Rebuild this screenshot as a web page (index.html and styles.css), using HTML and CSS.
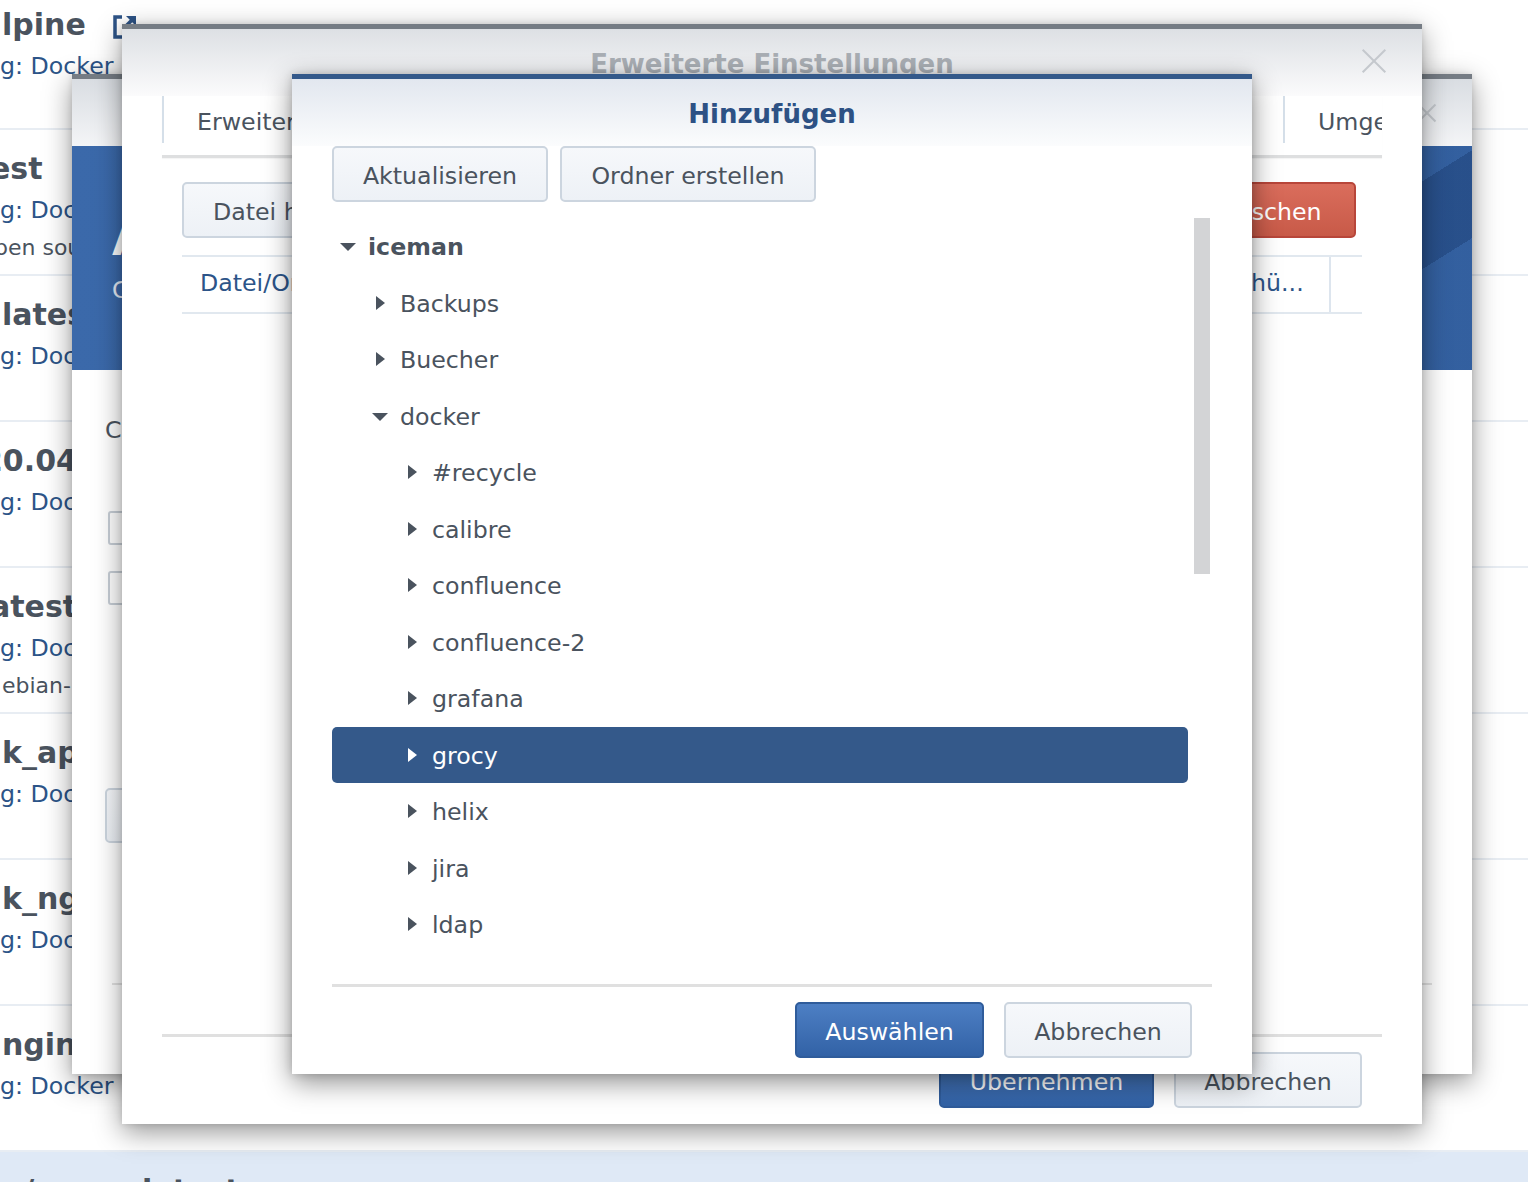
FILE: index.html
```html
<!DOCTYPE html>
<html lang="de">
<head>
<meta charset="utf-8">
<title>Hinzufügen</title>
<link rel="stylesheet" href="styles.css">
</head>
<body>
<div class="list">
  <div class="row">
    <div class="r-title">lpine<svg class="ext ext-1" viewBox="0 0 26 26" width="26" height="26"><path d="M10 3H3v20h20v-7" fill="none" stroke="#2d5386" stroke-width="3.5"/><path d="M14 2h10v10z" fill="#2d5386"/><path d="M22 4L11 15" stroke="#2d5386" stroke-width="3.5"/></svg></div>
    <div class="r-sub">g: Docker</div>
  </div>
  <div class="row">
    <div class="r-title cut-12">est<svg class="ext ext-2" viewBox="0 0 26 26" width="26" height="26"><path d="M10 3H3v20h20v-7" fill="none" stroke="#2d5386" stroke-width="3.5"/></svg></div>
    <div class="r-sub">g: Docker</div>
    <div class="r-desc cut-8">pen source</div>
  </div>
  <div class="row">
    <div class="r-title">lates</div>
    <div class="r-sub">g: Docker</div>
  </div>
  <div class="row">
    <div class="r-title cut-20">20.04</div>
    <div class="r-sub">g: Docker</div>
  </div>
  <div class="row">
    <div class="r-title cut-12">atest</div>
    <div class="r-sub">g: Docker</div>
    <div class="r-desc">ebian-</div>
  </div>
  <div class="row">
    <div class="r-title">k_ap</div>
    <div class="r-sub">g: Docker</div>
  </div>
  <div class="row">
    <div class="r-title">k_ng</div>
    <div class="r-sub">g: Docker</div>
  </div>
  <div class="row">
    <div class="r-title">ngin</div>
    <div class="r-sub">g: Docker</div>
  </div>
  <div class="row row-sel">
    <div class="r-title">n/proxy:latest</div>
  </div>
</div>

<!-- back window -->
<div class="win win-back">
  <div class="wb-head"><span class="close close-back"></span></div>
  <div class="wb-banner">
    <div class="wb-big">Allgemein</div>
    <div class="wb-small">Container</div>
  </div>
  <div class="wb-body">
    <div class="wb-label">Container</div>
    <div class="chk chk-1"></div>
    <div class="chk chk-2"></div>
    <div class="btn wb-btn">Erweiterte</div>
  </div>
  <div class="wb-foot"></div>
</div>

<!-- main window -->
<div class="win win-main">
  <div class="wm-head">
    <span></span>
    <div class="wm-title">Erweiterte Einstellungen</div>
    <span class="close close-main"></span>
  </div>
  <div class="wm-tabs">
    <div class="tab tab-first">Erweiterte Einstellungen</div>
    <div class="tab tab-last">Umgebung</div>
  </div>
  <div class="wm-toolbar">
    <div class="btn">Datei hinzufügen</div>
    <div class="btn btn-red">Löschen</div>
  </div>
  <div class="wm-table">
    <div class="cell cell-main">Datei/Ordner</div>
    <div class="cell cell-mid">Schü...</div>
    <div class="cell cell-end"></div>
  </div>
  <div class="grow"></div>
  <div class="wm-foot">
    <div class="btn btn-blue btn-apply">Übernehmen</div>
    <div class="btn btn-cancel-main">Abbrechen</div>
  </div>
</div>

<!-- picker window -->
<div class="win win-picker">
  <div class="wp-head">Hinzufügen</div>
  <div class="wp-toolbar">
    <div class="btn btn-upd">Aktualisieren</div>
    <div class="btn btn-new">Ordner erstellen</div>
  </div>
  <div class="wp-treewrap">
    <div class="tree">
      <div class="node lvl0 open root"><span class="tw"></span>iceman</div>
      <div class="node lvl1"><span class="tw"></span>Backups</div>
      <div class="node lvl1"><span class="tw"></span>Buecher</div>
      <div class="node lvl1 open"><span class="tw"></span>docker</div>
      <div class="node lvl2"><span class="tw"></span>#recycle</div>
      <div class="node lvl2"><span class="tw"></span>calibre</div>
      <div class="node lvl2"><span class="tw"></span>confluence</div>
      <div class="node lvl2"><span class="tw"></span>confluence-2</div>
      <div class="node lvl2"><span class="tw"></span>grafana</div>
      <div class="node lvl2 sel"><span class="tw"></span>grocy</div>
      <div class="node lvl2"><span class="tw"></span>helix</div>
      <div class="node lvl2"><span class="tw"></span>jira</div>
      <div class="node lvl2"><span class="tw"></span>ldap</div>
    </div>
    <div class="scroll"><div class="thumb"></div></div>
  </div>
  <div class="wp-foot">
    <div class="btn btn-blue btn-sel">Auswählen</div>
    <div class="btn btn-cancel">Abbrechen</div>
  </div>
</div>
</body>
</html>
```

FILE: styles.css
```css
html, body {
  margin: 0;
  padding: 0;
}
body {
  width: 1528px;
  height: 1182px;
  overflow: hidden;
  position: relative;
  background: #ffffff;
  font-family: "DejaVu Sans", Verdana, sans-serif;
  font-size: 23.7px;
  color: #4a535e;
}

/* background list */
.list {
  margin-top: -14px;
  height: 1196px;
  overflow: hidden;
}
.row {
  box-sizing: border-box;
  height: 146px;
  border-bottom: 2px solid #e8edf3;
  padding: 21px 0 0 2px;
  white-space: nowrap;
}
.row:first-child {
  height: 144px;
}
.row-sel {
  background: #dfe9f6;
  border-bottom: none;
}
.r-title {
  font-size: 30px;
  font-weight: bold;
  line-height: 36px;
  height: 36px;
  margin-bottom: 5px;
  color: #4a535e;
}
.cut-8 { margin-left: -8px; }
.cut-12 { margin-left: -12px; }
.cut-20 { margin-left: -20px; }
.ext {
  vertical-align: -5px;
}
.ext-1 { margin-left: 26px; }
.ext-2 { margin-left: 28px; }
.r-sub {
  line-height: 36px;
  height: 36px;
  margin-left: -2px;
  color: #2c5488;
  margin-bottom: 2px;
}
.r-desc {
  line-height: 36px;
  font-size: 22px;
  color: #4a535e;
}
.r-desc.cut-8 { margin-left: -8px; }

/* windows */
.win {
  position: absolute;
  box-sizing: border-box;
  background: #fff;
  display: flex;
  flex-direction: column;
  overflow: hidden;
  box-shadow: 0 8px 26px rgba(0, 0, 0, 0.42), 0 0 6px rgba(0, 0, 0, 0.12);
}

.close {
  display: block;
  position: relative;
  width: 24px;
  height: 24px;
}
.close::before, .close::after {
  content: "";
  position: absolute;
  left: -4px;
  top: 11px;
  width: 32px;
  height: 2px;
  background: #c4c8cd;
  transform: rotate(45deg);
}
.close::after {
  transform: rotate(-45deg);
}

.btn {
  box-sizing: border-box;
  height: 56px;
  border: 2px solid #ccd5df;
  border-radius: 5px;
  background: linear-gradient(#f6f8fb, #edf1f6);
  color: #4a535e;
  display: flex;
  align-items: center;
  justify-content: center;
  white-space: nowrap;
  padding: 3px 28px 0;
}
.btn-blue {
  background: linear-gradient(#4d7fc4, #3262a6);
  border-color: #2f5c9b;
  color: #ffffff;
}
.btn-red {
  background: linear-gradient(#da6d5c, #c85a48);
  border-color: #b8463a;
  color: #ffffff;
  width: 166px;
}

/* back window */
.win-back {
  left: 72px;
  top: 74px;
  width: 1400px;
  height: 1000px;
  border-top: 5px solid #757c84;
}
.wb-head {
  height: 67px;
  flex: none;
  background: linear-gradient(#d9dde2, #f4f5f7);
  display: flex;
  align-items: center;
  justify-content: flex-end;
  padding-right: 36px;
}
.close-back {
  width: 18px;
  height: 18px;
}
.close-back::before, .close-back::after {
  left: -3px;
  top: 8px;
  width: 24px;
}
.wb-banner {
  height: 224px;
  flex: none;
  background:
    linear-gradient(148deg, transparent 0 80%, rgba(20, 50, 100, 0.35) 80% 88%, transparent 88%),
    linear-gradient(205deg, rgba(70, 120, 190, 0.3) 0 30%, transparent 30%),
    linear-gradient(90deg, #3b69aa, #3464a4 50%, #2b5592);
  color: #ffffff;
  padding-left: 40px;
  box-sizing: border-box;
  padding-top: 70px;
}
.wb-big {
  font-size: 44px;
  font-weight: bold;
  line-height: 48px;
}
.wb-small {
  margin-top: 8px;
  line-height: 36px;
  color: #e4ebf5;
}
.wb-body {
  flex: 1;
  padding: 0 33px;
  display: flex;
  flex-direction: column;
  align-items: flex-start;
}
.wb-label {
  margin-top: 42px;
  line-height: 36px;
}
.chk {
  box-sizing: border-box;
  width: 34px;
  height: 34px;
  border: 2px solid #c7ced6;
  border-radius: 3px;
  margin-left: 3px;
}
.chk-1 { margin-top: 63px; }
.chk-2 { margin-top: 26px; }
.wb-btn {
  margin-top: 183px;
  height: 55px;
}
.wb-foot {
  height: 89px;
  flex: none;
  margin: 0 40px;
  border-top: 2px solid #e2e2e2;
}

/* main window */
.win-main {
  left: 122px;
  top: 24px;
  width: 1300px;
  height: 1100px;
  border-top: 5px solid #757c84;
}
.wm-head {
  height: 67px;
  flex: none;
  background: linear-gradient(#dde0e4, #fbfbfc);
  display: grid;
  grid-template-columns: 1fr auto 1fr;
  align-items: center;
}
.wm-title {
  font-size: 26px;
  font-weight: bold;
  color: #a9aeb4;
  line-height: 34px;
  padding-top: 2px;
}
.close-main {
  justify-self: end;
  margin-right: 36px;
  margin-top: -4px;
}
.wm-tabs {
  height: 59px;
  flex: none;
  margin: 0 40px;
  display: flex;
  justify-content: space-between;
  border-bottom: 3px solid #dedfe0;
  box-shadow: 0 1px 1px rgba(0, 0, 0, 0.04);
  overflow: hidden;
  white-space: nowrap;
}
.tab {
  height: 47px;
  display: flex;
  align-items: center;
  border-left: 2px solid #d5dfe9;
  padding-left: 33px;
  padding-top: 4px;
  box-sizing: border-box;
}
.tab-last {
  width: 99px;
  overflow: hidden;
}
.wm-toolbar {
  flex: none;
  margin-top: 24px;
  padding: 0 66px 0 60px;
  display: flex;
  justify-content: space-between;
}
.wm-toolbar .btn:first-child {
  padding: 3px 29px 0;
}
.wm-table {
  flex: none;
  margin: 17px 60px 0;
  height: 55px;
  border-top: 2px solid #e1e8ef;
  border-bottom: 2px solid #e1e8ef;
  display: flex;
  color: #2c5488;
  white-space: nowrap;
}
.cell {
  display: flex;
  align-items: center;
  padding-bottom: 3px;
}
.cell-main {
  flex: 1;
  padding-left: 18px;
}
.cell-mid {
  box-sizing: border-box;
  width: 124px;
  padding-left: 16px;
  border-right: 2px solid #dde5ee;
  overflow: hidden;
}
.cell-end {
  width: 31px;
}
.grow {
  flex: 1;
}
.wm-foot {
  flex: none;
  margin: 0 40px;
  border-top: 3px solid #e0e0e0;
  padding: 15px 20px 16px 0;
  display: flex;
  justify-content: flex-end;
  gap: 20px;
}
.btn-apply { width: 215px; }
.btn-cancel-main { width: 188px; }

/* picker window */
.win-picker {
  left: 292px;
  top: 74px;
  width: 960px;
  height: 1000px;
  border-top: 5px solid #34598a;
  box-shadow: 0 8px 26px rgba(0, 0, 0, 0.45), 0 0 8px rgba(0, 0, 0, 0.15);
}
.wp-head {
  height: 67px;
  flex: none;
  background: linear-gradient(#e2e7ef, #fbfcfd);
  display: flex;
  align-items: center;
  justify-content: center;
  font-size: 26px;
  font-weight: bold;
  color: #2d5184;
  padding-top: 2px;
  box-sizing: border-box;
}
.wp-toolbar {
  flex: none;
  display: flex;
  gap: 12px;
  padding-left: 40px;
}
.btn-upd { width: 216px; }
.btn-new { width: 256px; }
.wp-treewrap {
  flex: 1;
  margin: 16px 0 0 40px;
  display: flex;
  gap: 6px;
  min-height: 0;
}
.tree {
  width: 856px;
  padding-top: 0;
}
.node {
  height: 56.5px;
  display: flex;
  align-items: center;
  white-space: nowrap;
  color: #4a535e;
  border-radius: 5px;
  padding-top: 2px;
  box-sizing: border-box;
}
.node.root {
  font-weight: bold;
}
.lvl0 { padding-left: 8px; }
.lvl1 { padding-left: 40px; }
.lvl2 { padding-left: 72px; }
.tw {
  width: 16px;
  height: 16px;
  margin-right: 12px;
  position: relative;
  flex: none;
}
.tw::before {
  content: "";
  position: absolute;
  left: 4px;
  top: 0;
  border-left: 9px solid #4a535e;
  border-top: 7.5px solid transparent;
  border-bottom: 7.5px solid transparent;
}
.open .tw::before {
  left: 0;
  top: 4px;
  border-left: 8px solid transparent;
  border-right: 8px solid transparent;
  border-top: 8px solid #4a535e;
  border-bottom: none;
}
.node.sel {
  background: #34598a;
  color: #ffffff;
}
.node.sel .tw::before {
  border-left-color: #ffffff;
}
.scroll {
  width: 16px;
}
.thumb {
  height: 356px;
  background: #d3d4d6;
}
.wp-foot {
  flex: none;
  margin: 0 40px;
  border-top: 3px solid #e0e0e0;
  padding: 15px 20px 16px 0;
  display: flex;
  justify-content: flex-end;
  gap: 20px;
}
.btn-sel { width: 189px; }
.btn-cancel { width: 188px; }
```
